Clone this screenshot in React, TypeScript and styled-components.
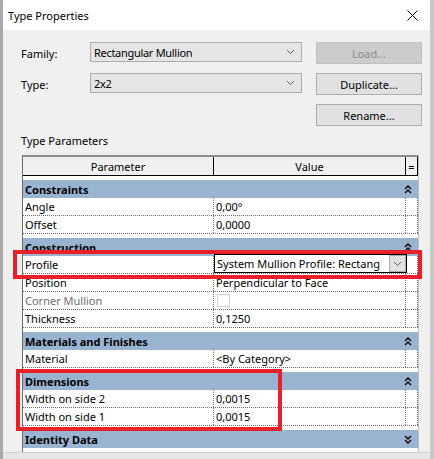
import React from 'react'
import styled, { createGlobalStyle } from 'styled-components'

const GlobalStyle = createGlobalStyle`
  html, body {
    margin: 0;
    padding: 0;
    background: #f0f0f0;
  }
  * {
    box-sizing: border-box;
  }
`

const FONT = `"Segoe UI", "Noto Sans", "Open Sans", sans-serif`

const Window = styled.div`
  position: relative;
  width: 434px;
  height: 459px;
  overflow: hidden;
  border-left: 3px solid #a9a9a9;
  border-right: 4px solid #c8c8c8;
  background: #f0f0f0;
  font-family: ${FONT};
  font-size: 11px;
  color: #000;
  display: flex;
  flex-direction: column;
`

const TitleBar = styled.div`
  height: 30px;
  flex: none;
  background: #fff;
  display: flex;
  align-items: center;
  justify-content: space-between;
  padding: 0 0 0 5px;
`

const Title = styled.span`
  font-size: 11px;
`

const CloseButton = styled.div`
  width: 36px;
  height: 30px;
  display: flex;
  align-items: center;
  justify-content: center;
`

const Body = styled.div`
  flex: 1;
  padding: 12px 0 0 18px;
  display: flex;
  flex-direction: column;
`

const TopGrid = styled.div`
  display: grid;
  grid-template-columns: 55px 212px 106px;
  grid-auto-rows: 22px;
  column-gap: 14px;
  row-gap: 9px;
  align-items: center;
`

const Label = styled.span`
  font-size: 11px;
`

const Combo = styled.div`
  height: 20px;
  align-self: start;
  background: #e5e5e5;
  border: 1px solid #adadad;
  display: flex;
  align-items: center;
  justify-content: space-between;
  padding: 0 6px 0 3px;
  font-size: 11px;
  letter-spacing: -0.3px;
`

const Button = styled.div<{ disabled?: boolean }>`
  height: 22px;
  background: ${({ disabled }) => (disabled ? '#cccccc' : '#e1e1e1')};
  border: 1px solid ${({ disabled }) => (disabled ? '#bfbfbf' : '#adadad')};
  color: ${({ disabled }) => (disabled ? '#8a8a8a' : '#000')};
  display: flex;
  align-items: center;
  justify-content: center;
  font-size: 11px;
`

const SectionLabel = styled.div`
  margin-top: 8px;
  height: 14px;
  line-height: 14px;
  font-size: 11px;
`

const Table = styled.div`
  margin: 7px 0 0 1px;
  width: 397px;
  flex: 1;
  background: #fff;
  border-left: 1px solid #696969;
  border-top: 2px solid #8c8c8c;
  border-right: 1px solid #c0c0c0;
  display: flex;
  flex-direction: column;
`

const Head = styled.div`
  display: grid;
  grid-template-columns: 191px 192px 12px;
  height: 19px;
  background: #f0f0f0;
  border-bottom: 1px solid #000;
`

const HeadCell = styled.div`
  display: flex;
  align-items: center;
  justify-content: center;
  border-right: 1px solid #000;
  font-size: 11px;
`

const Group = styled.div`
  margin-top: 4px;
  display: flex;
  flex-direction: column;
`

const GroupHeader = styled.div`
  height: 18px;
  width: 395px;
  background: #99b4d1;
  display: flex;
  align-items: center;
  justify-content: space-between;
  padding: 0 6px 0 2px;
  font-weight: 700;
  font-size: 11px;
`

const Row = styled.div`
  display: grid;
  grid-template-columns: 191px 192px 12px;
  height: 18px;
  width: 395px;
  border-bottom: 1px dotted #6a6a6a;
`

const Cell = styled.div<{ dim?: boolean }>`
  display: flex;
  align-items: center;
  padding-left: 2px;
  border-right: 1px dotted #6a6a6a;
  font-size: 11px;
  color: ${({ dim }) => (dim ? '#6d6d6d' : '#000')};
  white-space: nowrap;
  overflow: hidden;
  position: relative;
`

const Check = styled.div`
  width: 13px;
  height: 13px;
  margin-left: 1px;
  border: 1px solid #cfcfcf;
  background: #fff;
`

const Dropdown = styled.div`
  position: absolute;
  left: 0;
  top: -2px;
  width: 193px;
  height: 19px;
  border: 1px solid #000;
  background: #fff;
  display: flex;
  align-items: center;
  padding-left: 2px;
  overflow: hidden;
`

const DropText = styled.span`
  flex: 1;
  overflow: hidden;
  white-space: nowrap;
`

const DropButton = styled.div`
  width: 17px;
  height: 17px;
  background: #e1e1e1;
  border: 1px solid #adadad;
  display: flex;
  align-items: center;
  justify-content: center;
  flex: none;
`

const Highlight = styled.div<{ x: number; y: number; w: number; h: number }>`
  position: absolute;
  left: ${({ x }) => x}px;
  top: ${({ y }) => y}px;
  width: ${({ w }) => w}px;
  height: ${({ h }) => h}px;
  border: 4px solid #e8202a;
  pointer-events: none;
`

const BottomStrip = styled.div`
  height: 7px;
  flex: none;
  margin-left: -18px;
  background: #e6e6e6;
  border-top: 1px solid #d2d2d2;
`

const Chevron = ({ color = '#606060' }: { color?: string }) => (
  <svg width="9" height="6" viewBox="0 0 9 6">
    <polyline points="1,1 4.5,4.5 8,1" fill="none" stroke={color} strokeWidth="1" />
  </svg>
)

const DoubleChevron = ({ down }: { down?: boolean }) => (
  <svg width="8" height="9" viewBox="0 0 8 9" style={down ? { transform: 'rotate(180deg)' } : undefined}>
    <polyline points="1,4 4,1 7,4" fill="none" stroke="#000" strokeWidth="1.4" />
    <polyline points="1,8 4,5 7,8" fill="none" stroke="#000" strokeWidth="1.4" />
  </svg>
)

type Param = { name: string; value?: string; dim?: boolean; kind?: 'check' | 'dropdown' }

const groups: { title: string; open: boolean; rows: Param[] }[] = [
  {
    title: 'Constraints',
    open: true,
    rows: [
      { name: 'Angle', value: '0,00°' },
      { name: 'Offset', value: '0,0000' },
    ],
  },
  {
    title: 'Construction',
    open: true,
    rows: [
      { name: 'Profile', value: 'System Mullion Profile: Rectang', kind: 'dropdown' },
      { name: 'Position', value: 'Perpendicular to Face' },
      { name: 'Corner Mullion', dim: true, kind: 'check' },
      { name: 'Thickness', value: '0,1250' },
    ],
  },
  {
    title: 'Materials and Finishes',
    open: true,
    rows: [{ name: 'Material', value: '<By Category>' }],
  },
  {
    title: 'Dimensions',
    open: true,
    rows: [
      { name: 'Width on side 2', value: '0,0015' },
      { name: 'Width on side 1', value: '0,0015' },
    ],
  },
  { title: 'Identity Data', open: false, rows: [] },
]

const ValueCell = ({ p }: { p: Param }) => {
  if (p.kind === 'check') {
    return (
      <Cell>
        <Check />
      </Cell>
    )
  }
  if (p.kind === 'dropdown') {
    return (
      <Cell style={{ overflow: 'visible' }}>
        <Dropdown>
          <DropText>{p.value}</DropText>
          <DropButton>
            <Chevron />
          </DropButton>
        </Dropdown>
      </Cell>
    )
  }
  return <Cell>{p.value}</Cell>
}

const App = () => {
  return (
    <>
      <GlobalStyle />
      <Window>
        <TitleBar>
          <Title>Type Properties</Title>
          <CloseButton>
            <svg width="11" height="11" viewBox="0 0 11 11">
              <line x1="0.5" y1="0.5" x2="10.5" y2="10.5" stroke="#000" strokeWidth="1" />
              <line x1="10.5" y1="0.5" x2="0.5" y2="10.5" stroke="#000" strokeWidth="1" />
            </svg>
          </CloseButton>
        </TitleBar>
        <Body>
          <TopGrid>
            <Label>Family:</Label>
            <Combo>
              <span>Rectangular Mullion</span>
              <Chevron />
            </Combo>
            <Button disabled>Load...</Button>
            <Label>Type:</Label>
            <Combo>
              <span>2x2</span>
              <Chevron />
            </Combo>
            <Button>Duplicate...</Button>
            <span />
            <span />
            <Button>Rename...</Button>
          </TopGrid>
          <SectionLabel>Type Parameters</SectionLabel>
          <Table>
            <Head>
              <HeadCell>Parameter</HeadCell>
              <HeadCell>Value</HeadCell>
              <HeadCell>=</HeadCell>
            </Head>
            {groups.map((g) => (
              <Group key={g.title}>
                <GroupHeader>
                  <span>{g.title}</span>
                  <DoubleChevron down={!g.open} />
                </GroupHeader>
                {g.rows.map((p) => (
                  <Row key={p.name}>
                    <Cell dim={p.dim}>{p.name}</Cell>
                    <ValueCell p={p} />
                    <Cell />
                  </Row>
                ))}
              </Group>
            ))}
          </Table>
          <BottomStrip />
        </Body>
        <Highlight x={10} y={250} w={409} h={29} />
        <Highlight x={13} y={369} w={266} h={62} />
      </Window>
    </>
  )
}

export default App
